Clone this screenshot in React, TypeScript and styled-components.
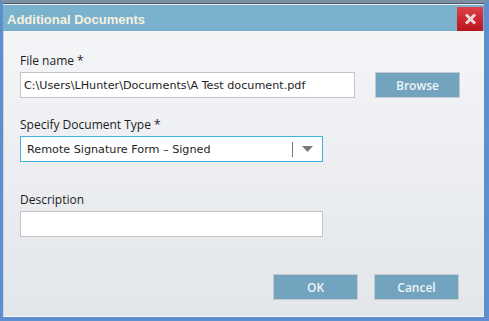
import styled, { createGlobalStyle } from 'styled-components';

const GlobalStyle = createGlobalStyle`
    html, body {
        margin: 0;
        padding: 0;
        background: #ffffff;
    }
    * {
        box-sizing: border-box;
    }
`;

const Window = styled.div`
    width: 489px;
    height: 321px;
    display: flex;
    flex-direction: column;
    border-left: 3px solid #5d8fcf;
    border-right: 5px solid #5d8fcf;
    border-bottom: 4px solid #5d8fcf;
    border-top: 3px solid #7d8fa3;
    background: #dfe6ee;
`;

const TitleBar = styled.div`
    height: 28px;
    border-top: 1px solid #4d5b6a;
    box-shadow: inset 0 1px 0 #e4ebf1;
    background: #7ab1cc;
    display: flex;
    align-items: center;
    justify-content: space-between;
    padding: 3px 0 0 4px;
`;

const Title = styled.span`
    font-family: 'Liberation Sans', Arial, sans-serif;
    font-weight: bold;
    font-size: 13px;
    color: #f6f1df;
`;

const CloseButton = styled.button`
    width: 26px;
    height: 24px;
    margin-right: 1px;
    border: none;
    padding: 0;
    background: linear-gradient(#e0404a, #b8141c);
    display: flex;
    align-items: center;
    justify-content: center;
`;

const Body = styled.div`
    flex: 1;
    background: linear-gradient(#f4f5f7, #e3e6ea);
    border-left: 1px solid #c9d6e4;
    border-bottom: 1px solid #f8f9fb;
    padding: 22px 0 0 16px;
    display: flex;
    flex-direction: column;
`;

const Label = styled.div<{ $gap: number }>`
    font-family: 'Open Sans', sans-serif;
    font-size: 12px;
    color: #1c1c1c;
    line-height: 16px;
    margin-top: ${(p) => p.$gap}px;
    margin-bottom: 3px;
`;

const Row = styled.div`
    display: flex;
    align-items: center;
    gap: 20px;
`;

const TextBox = styled.div<{ $width: number }>`
    width: ${(p) => p.$width}px;
    height: 26px;
    background: #ffffff;
    border: 1px solid #c4c4c4;
    font-family: 'DejaVu Sans', Verdana, sans-serif;
    font-size: 11.2px;
    color: #1e1e1e;
    display: flex;
    align-items: center;
    padding-left: 3px;
    white-space: nowrap;
`;

const Select = styled.div`
    width: 303px;
    height: 26px;
    background: #ffffff;
    border: 1px solid #3fb2e2;
    display: flex;
    align-items: center;
    font-family: 'DejaVu Sans', Verdana, sans-serif;
    font-size: 11.2px;
    color: #1e1e1e;
    padding-left: 6px;
`;

const SelectText = styled.span`
    flex: 1;
`;

const Divider = styled.span`
    width: 1px;
    height: 15px;
    background: #6c7b86;
`;

const Arrow = styled.span`
    width: 29px;
    display: flex;
    justify-content: center;
`;

const Button = styled.button`
    width: 85px;
    height: 26px;
    background: #72a4bf;
    border: 1px solid #c3c9ce;
    font-family: 'Open Sans', sans-serif;
    font-size: 12px;
    font-weight: 600;
    color: #eef4f7;
    padding: 0;
`;

const Footer = styled.div`
    display: flex;
    justify-content: flex-end;
    gap: 16px;
    margin-top: 37px;
    padding-right: 25px;
`;

export default function App() {
    return (
        <>
            <GlobalStyle />
            <Window>
                <TitleBar>
                    <Title>Additional Documents</Title>
                    <CloseButton aria-label="Close">
                        <svg width="13" height="12" viewBox="0 0 13 12">
                            <path d="M2 1.5 L11 10.5 M11 1.5 L2 10.5" stroke="#f1d9da" strokeWidth="3" />
                        </svg>
                    </CloseButton>
                </TitleBar>
                <Body>
                    <Label $gap={0}>File name *</Label>
                    <Row>
                        <TextBox $width={335}>C:\Users\LHunter\Documents\A Test document.pdf</TextBox>
                        <Button>Browse</Button>
                    </Row>
                    <Label $gap={19}>Specify Document Type *</Label>
                    <Select>
                        <SelectText>Remote Signature Form – Signed</SelectText>
                        <Divider />
                        <Arrow>
                            <svg width="11" height="6" viewBox="0 0 11 6">
                                <path d="M0 0 H11 L5.5 6 Z" fill="#7a7a7a" />
                            </svg>
                        </Arrow>
                    </Select>
                    <Label $gap={30}>Description</Label>
                    <TextBox $width={303} />
                    <Footer>
                        <Button>OK</Button>
                        <Button>Cancel</Button>
                    </Footer>
                </Body>
            </Window>
        </>
    );
}
